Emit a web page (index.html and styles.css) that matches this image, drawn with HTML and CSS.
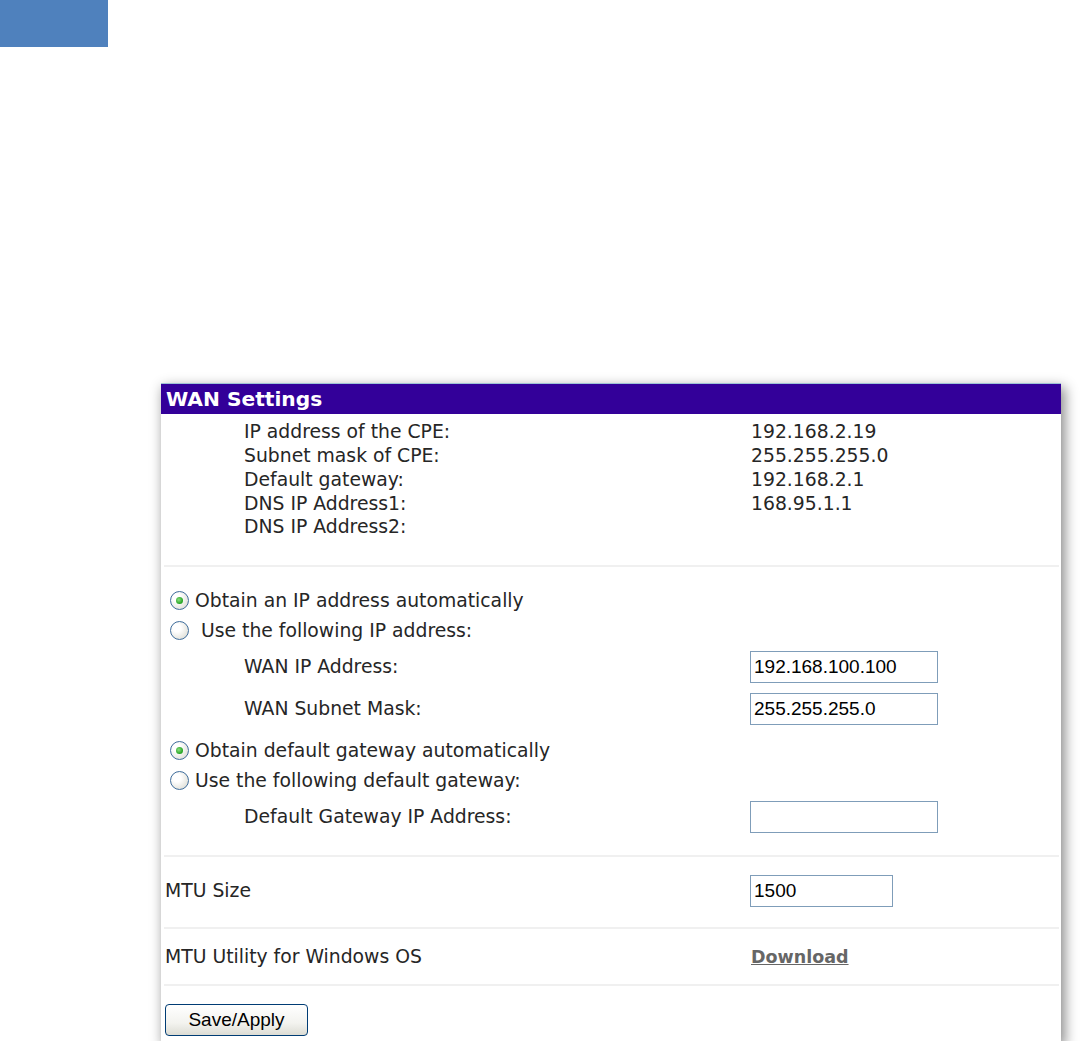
FILE: index.html
```html
<!doctype html>
<html lang="en">
<head>
	<meta charset="UTF-8">
	<title>WAN Settings</title>
<link rel="stylesheet" href="styles.css">
</head>
<body>

<div class="top-block"></div>

<form class="panel">
	<div class="panel-title">WAN Settings</div>

	<div class="section info">
		<div class="row"><span class="label indent">IP address of the CPE:</span><span class="value">192.168.2.19</span></div>
		<div class="row"><span class="label indent">Subnet mask of CPE:</span><span class="value">255.255.255.0</span></div>
		<div class="row"><span class="label indent">Default gateway:</span><span class="value">192.168.2.1</span></div>
		<div class="row"><span class="label indent">DNS IP Address1:</span><span class="value">168.95.1.1</span></div>
		<div class="row"><span class="label indent">DNS IP Address2:</span><span class="value"></span></div>
	</div>

	<div class="section ip">
		<label class="radio-row"><span class="radio checked"></span>Obtain an IP address automatically</label>
		<label class="radio-row"><span class="radio"></span>&nbsp;Use the following IP address:</label>
		<div class="row field"><span class="label indent">WAN IP Address:</span><input class="text" type="text" value="192.168.100.100"></div>
		<div class="row field"><span class="label indent">WAN Subnet Mask:</span><input class="text" type="text" value="255.255.255.0"></div>
		<label class="radio-row group"><span class="radio checked"></span>Obtain default gateway automatically</label>
		<label class="radio-row"><span class="radio"></span>Use the following default gateway:</label>
		<div class="row field"><span class="label indent">Default Gateway IP Address:</span><input class="text" type="text" value=""></div>
	</div>

	<div class="section mtu">
		<div class="row field"><span class="label">MTU Size</span><input class="text short" type="text" value="1500"></div>
	</div>

	<div class="section utility">
		<div class="row"><span class="label">MTU Utility for Windows OS</span><a class="download" href="#">Download</a></div>
	</div>

	<div class="section actions">
		<button class="save" type="button">Save/Apply</button>
	</div>
</form>

</body>
</html>
```

FILE: styles.css
```css
body {
	margin: 0;
	background: #fff;
	font-family: "DejaVu Sans", Verdana, sans-serif;
	font-size: 18.8px;
	color: #262626;
}
.top-block {
	width: 108px;
	height: 47px;
	background: #4f81bd;
}
.panel {
	width: 900px;
	margin: 336px 0 0 161px;
	background: #fff;
	box-shadow: 3px 5px 12px 1px rgba(0, 0, 0, 0.45);
}
.panel-title {
	height: 31px;
	line-height: 31px;
	padding-left: 5px;
	background: #330099;
	border-top: 1px solid #9fc3d6;
	box-sizing: border-box;
	color: #fff;
	font-weight: bold;
	font-size: 20.2px;
}
.section {
	margin: 0 2px 0 3px;
	border-top: 2px solid #f0f0f0;
}
.section.info {
	border-top: 0;
	padding: 6px 0 26px;
}
.row {
	display: grid;
	grid-template-columns: 586px 1fr;
	align-items: center;
	height: 23.75px;
	padding-left: 1px;
}
.row .label.indent {
	padding-left: 79px;
}
.row.field {
	height: 42px;
}
.section.ip {
	padding: 19px 0 17px;
}
.radio-row {
	display: flex;
	align-items: center;
	height: 30px;
	padding-left: 6px;
}
.radio-row.group {
	margin-top: 6px;
}
.radio {
	box-sizing: border-box;
	width: 19px;
	height: 19px;
	margin-right: 6px;
	border: 1px solid #3f6d9c;
	border-radius: 50%;
	background: radial-gradient(circle at 35% 35%, #fff 25%, #e6e6e0 70%, #cfcfc8 100%);
	position: relative;
}
.radio.checked::after {
	content: "";
	position: absolute;
	left: 5px;
	top: 5px;
	width: 7px;
	height: 7px;
	border-radius: 50%;
	background: radial-gradient(circle at 40% 40%, #8be07f, #21a121 70%);
}
.text {
	box-sizing: border-box;
	width: 188px;
	height: 32px;
	margin: 0 0 0 -1px;
	padding: 0 3px;
	border: 1px solid #7f9db9;
	font-family: "Liberation Sans", Arial, sans-serif;
	font-size: 19px;
	color: #000;
}
.text.short {
	width: 143px;
}
.section.mtu {
	padding: 18px 0 20px;
}
.section.mtu .row.field {
	height: 32px;
}
.section.utility {
	padding: 16px 0 15px;
}
.section.utility .row {
	height: 24px;
}
.download {
	font-weight: bold;
	font-size: 17.5px;
	color: #666;
}
.section.actions {
	padding: 18px 0 5px 1px;
}
.save {
	width: 143px;
	height: 32px;
	border: 1px solid #003c74;
	border-radius: 4px;
	background: linear-gradient(to bottom, #fff 0%, #f3f3ef 60%, #dcdcd4 100%);
	font-family: "Liberation Sans", Arial, sans-serif;
	font-size: 19px;
	color: #000;
	padding: 0;
}
```
